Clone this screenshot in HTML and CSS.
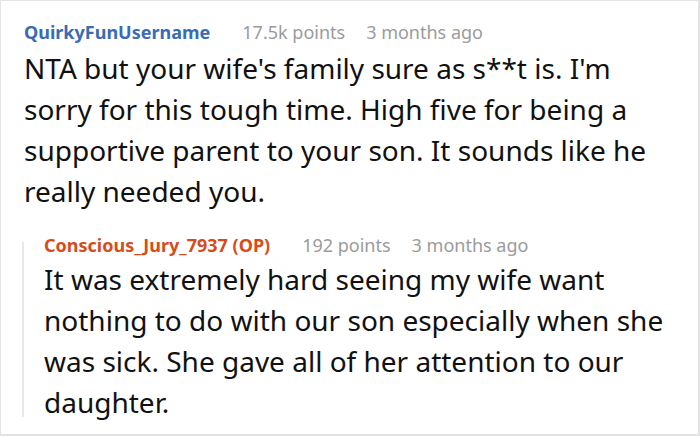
FILE: index.html
```
<!DOCTYPE html>
<html>
<head>
<meta charset="utf-8">
<link rel="stylesheet" href="styles.css">
</head>
<body>
<div class="thread">
  <div class="comment">
    <div class="meta">
      <span class="user user-blue">QuirkyFunUsername</span>
      <span class="info">17.5k points</span>
      <span class="info">3 months ago</span>
    </div>
    <p class="text">NTA but your wife's family sure as s**t is. I'm sorry for this tough time. High five for being a supportive parent to your son. It sounds like he really needed you.</p>
  </div>
  <div class="reply">
    <div class="meta">
      <span class="user user-orange">Conscious_Jury_7937 (OP)</span>
      <span class="info">192 points</span>
      <span class="info">3 months ago</span>
    </div>
    <p class="text">It was extremely hard seeing my wife want nothing to do with our son especially when she was sick. She gave all of her attention to our daughter.</p>
  </div>
</div>
</body>
</html>
```
FILE: styles.css
```
html, body {
  margin: 0;
  padding: 0;
  background: #fff;
}
.thread {
  width: 700px;
  height: 436px;
  box-sizing: border-box;
  border: 1px solid #e3e3e3;
  border-right-width: 2px;
  border-bottom-width: 2px;
  padding: 17px 28px 0 23px;
  font-family: "Noto Sans", "Open Sans", sans-serif;
  overflow: hidden;
}
.meta {
  display: flex;
  gap: 21px;
  align-items: baseline;
  height: 28px;
  line-height: 28px;
  white-space: nowrap;
}
.user {
  font-weight: 700;
  font-size: 18px;
  margin-right: 11px;
}
.user-blue { color: #3a6bb5; }
.user-orange { color: #d64c1b; }
.info {
  font-size: 18px;
  color: #9b9b9b;
}
.text {
  margin: 2px 0 0;
  font-size: 28px;
  line-height: 41px;
  color: #111;
}
.reply {
  position: relative;
  margin-top: 19px;
  padding-left: 20px;
}
.reply .text {
  margin-top: 0;
}
.reply::before {
  content: "";
  position: absolute;
  left: -2px;
  top: 11px;
  bottom: 6px;
  width: 2px;
  background: #e8e8e8;
}
```
